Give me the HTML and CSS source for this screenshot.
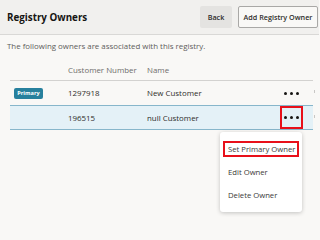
FILE: index.html
```html
<!DOCTYPE html>
<html>
<head>
<meta charset="utf-8">
<link rel="stylesheet" href="styles.css">
</head>
<body>
<div class="page">
  <header class="header">
    <h1 class="title">Registry Owners</h1>
    <div class="actions">
      <button class="btn btn-back">Back</button>
      <button class="btn btn-add">Add Registry Owner</button>
    </div>
  </header>
  <p class="desc">The following owners are associated with this registry.</p>
  <div class="table">
    <div class="row head">
      <div class="c-badge"></div>
      <div class="c-num">Customer Number</div>
      <div class="c-name">Name</div>
      <div class="c-act"></div>
    </div>
    <div class="row">
      <div class="c-badge"><span class="badge">Primary</span></div>
      <div class="c-num">1297918</div>
      <div class="c-name">New Customer</div>
      <div class="c-act"><span class="dots"><i></i><i></i><i></i></span></div>
      <span class="tick"></span>
    </div>
    <div class="row selected">
      <div class="c-badge"></div>
      <div class="c-num">196515</div>
      <div class="c-name">null Customer</div>
      <div class="c-act"><span class="dots boxed"><i></i><i></i><i></i></span></div>
      <span class="tick"></span>
    </div>
    <div class="menu">
      <div class="item boxed-item">Set Primary Owner</div>
      <div class="item">Edit Owner</div>
      <div class="item">Delete Owner</div>
    </div>
  </div>
</div>
</body>
</html>
```
FILE: styles.css
```css
html, body { margin: 0; padding: 0; }
body {
  background: #f9f8f6;
  font-family: "Open Sans", "Noto Sans", sans-serif;
  color: #333;
  width: 319px;
  height: 224px;
  overflow: hidden;
  white-space: nowrap;
}
.page { position: relative; }
.header {
  height: 35px;
  background: #f1f0ee;
  border-bottom: 1px solid #d9d8d6;
  display: flex;
  align-items: center;
  justify-content: space-between;
  padding-left: 7px;
  padding-right: 1px;
  box-sizing: border-box;
}
.title {
  margin: 0;
  font-size: 9.8px;
  font-weight: 700;
  color: #161513;
}
.actions { display: flex; gap: 6px; }
.btn {
  font-family: inherit;
  font-size: 7.2px;
  font-weight: 600;
  height: 22px;
  padding: 0;
  border-radius: 2px;
  color: #2e2d2b;
}
.btn-back {
  width: 32px;
  background: #e4e3e1;
  border: none;
}
.btn-add {
  width: 80px;
  background: #f9f8f6;
  border: 1px solid #a9a8a6;
}
.desc {
  margin: 5px 0 0 7px;
  font-size: 7.9px;
  color: #5e5d5b;
  line-height: 12px;
}
.table {
  margin: 7px 6px 0 10px;
  position: relative;
}
.row {
  display: flex;
  align-items: center;
  height: 25px;
  border-bottom: 1px solid #dcdbd9;
  font-size: 7.9px;
  color: #2e2d2b;
  position: relative;
  box-sizing: border-box;
}
.row.head {
  height: 22px;
  border-bottom: 1px solid #d3d2d0;
  color: #6e6d6b;
}
.row.selected {
  background: #e4f1f7;
  border-top: 1px solid #87b6cb;
  border-bottom: 1px solid #87b6cb;
  margin-top: -1px;
  height: 25px;
}
.c-badge { width: 58px; padding-left: 4px; box-sizing: border-box; display: flex; }
.c-num { width: 79px; }
.c-name { flex: 1; }
.c-act { width: 33px; display: flex; }
.badge {
  display: inline-block;
  background: #27809d;
  color: #fff;
  font-size: 5.6px;
  font-weight: 700;
  height: 11px;
  line-height: 11px;
  width: 29px;
  text-align: center;
  border-radius: 2px;
}
.dots {
  display: flex;
  gap: 3px;
  align-items: center;
  justify-content: center;
  width: 23px;
  height: 23px;
  box-sizing: border-box;
}
.dots i {
  width: 3px;
  height: 3px;
  border-radius: 50%;
  background: #161513;
}
.dots.boxed { border: 2px solid #e8101a; }
.tick {
  position: absolute;
  right: -2px;
  top: 9px;
  width: 1px;
  height: 3px;
  background: #c8c7c5;
}
.menu {
  position: absolute;
  left: 210px;
  top: 73px;
  width: 82px;
  height: 80px;
  background: #fff;
  border-radius: 3px;
  box-shadow: 0 1px 4px rgba(0,0,0,0.22);
  padding: 9px 3px 0 3px;
  box-sizing: border-box;
  z-index: 2;
}
.item {
  font-size: 7.7px;
  color: #3a3937;
  height: 23px;
  line-height: 15px;
  padding-left: 5px;
}
.boxed-item {
  border: 2px solid #e8101a;
  padding-left: 3px;
  height: 16px;
  line-height: 12px;
  margin-bottom: 8px;
  box-sizing: border-box;
}
```
